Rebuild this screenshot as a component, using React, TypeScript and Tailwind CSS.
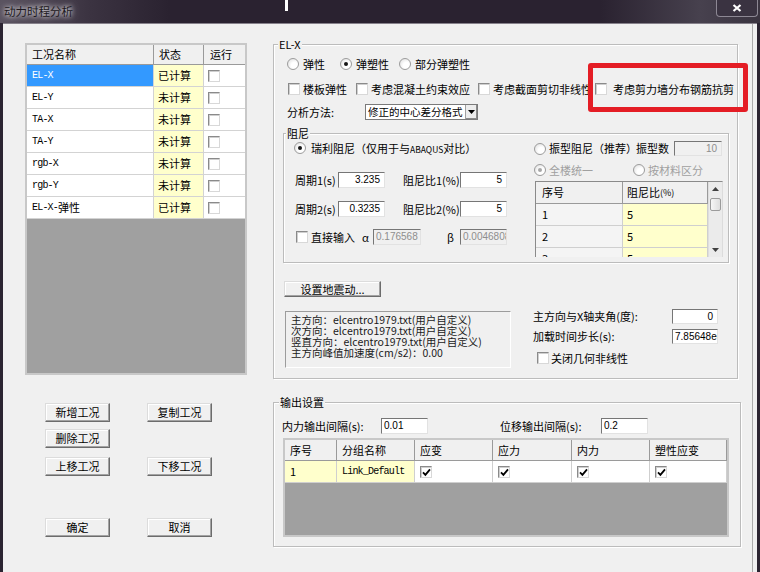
import React from 'react'

type Props = { children?: React.ReactNode; className?: string }

function Check({ checked = false, className = '' }: { checked?: boolean; className?: string }) {
  return (
    <span className={`relative inline-block w-[12px] h-[12px] shrink-0 bg-white border border-[#8a8a8a] border-b-[#d8d8d8] border-r-[#d8d8d8] shadow-[inset_1px_1px_0_#cfcfcf] ${className}`}>
      {checked && (
        <svg className="absolute left-[1px] top-[1px]" width="9" height="9" viewBox="0 0 9 9">
          <path d="M1 4.3 L3.4 6.8 L8 1.4" fill="none" stroke="#000" strokeWidth="1.8" />
        </svg>
      )}
    </span>
  )
}

function Radio({ on = false, disabled = false, className = '' }: { on?: boolean; disabled?: boolean; className?: string }) {
  return (
    <span className={`inline-flex items-center justify-center w-[12px] h-[12px] shrink-0 rounded-full border border-[#9c9c9c] bg-[radial-gradient(circle_at_65%_65%,#ffffff_35%,#d9d9d9_100%)] ${className}`}>
      {on && <span className={`w-[4px] h-[4px] rounded-full ${disabled ? 'bg-[#a8a8a8]' : 'bg-[#151515]'}`} />}
    </span>
  )
}

function Field({ value, className = '', left = false, disabled = false }: { value: string; className?: string; left?: boolean; disabled?: boolean }) {
  return (
    <div className={`flex items-center px-[2px] overflow-hidden whitespace-nowrap leading-none text-[10px] font-['Liberation_Sans',sans-serif] border border-[#767676] border-b-[#e2e2e2] border-r-[#e2e2e2] ${left ? 'justify-start' : 'justify-end pr-[4px]'} ${disabled ? 'bg-[#f0f0f0] text-[#8e8e8e]' : 'bg-white text-black'} ${className}`}>
      {value}
    </div>
  )
}

function Btn({ children, className = '' }: Props) {
  return (
    <div className={`flex items-center justify-center leading-none bg-[#f0f0f0] border border-[#dcdcdc] border-r-[#6c6c6c] border-b-[#6c6c6c] shadow-[inset_-1px_-1px_0_#a3a3a3,inset_1px_1px_0_#ffffff] ${className}`}>
      {children}
    </div>
  )
}

function Group({ title, className = '', legend = 'left-[4px]', children }: Props & { title: string; legend?: string }) {
  return (
    <div className={`relative border border-[#bcbcbc] shadow-[1px_1px_0_#ffffff,inset_1px_1px_0_#ffffff] ${className}`}>
      <span className={`absolute -top-[8px] bg-[#f0f0f0] px-[1px] leading-[14px] ${legend}`}>{title}</span>
      {children}
    </div>
  )
}

const mono = "font-['Liberation_Mono','Noto_Sans_CJK_SC',monospace] text-[10px] tracking-[-0.8px]"

const cases: { name: React.ReactNode; status: string; sel?: boolean }[] = [
  { name: 'EL-X', status: '已计算', sel: true },
  { name: 'EL-Y', status: '未计算' },
  { name: 'TA-X', status: '未计算' },
  { name: 'TA-Y', status: '未计算' },
  { name: 'rgb-X', status: '未计算' },
  { name: 'rgb-Y', status: '未计算' },
  { name: <>EL-X-<span className="font-['Noto_Sans_CJK_SC',sans-serif] text-[11px] tracking-normal">弹性</span></>, status: '已计算' },
]

const outCols = ['应变', '应力', '内力', '塑性应变']

export default function App() {
  return (
    <div className="relative w-[760px] h-[572px] overflow-hidden flex flex-col bg-[#2b2431] text-[11px] text-black font-['Noto_Sans_CJK_SC','Liberation_Sans',sans-serif]">
      {/* title bar */}
      <div className="h-[23px] shrink-0 flex bg-[linear-gradient(90deg,#5a5360_0px,#3b3341_90px,#2a2230_170px,#2a2230_600px,#47414e_700px,#3a3440_760px)]">
        <span className="ml-[4px] mt-[4px] leading-[14px] text-[11.5px] text-[#1c1820] [text-shadow:0_0_4px_#ffffff,0_0_8px_#cfcad4]">动力时程分析</span>
        <div className="ml-auto mr-[2px] w-[42px] h-[17px] flex items-center justify-center rounded-b-[4px] border border-t-0 border-[#8d8894] bg-[#3a3341]">
          <svg width="10" height="8" viewBox="0 0 10 8">
            <path d="M1.5 1 L8.5 7 M8.5 1 L1.5 7" stroke="#ffffff" strokeWidth="2.2" />
          </svg>
        </div>
      </div>
      <div className="absolute left-[285px] top-0 w-[3px] h-[11px] bg-white" />

      {/* body */}
      <div className="ml-[3px] mr-[3px] flex-1 bg-[#f0f0f0] border-t border-[#86818b]">
        <div className="w-[750px] h-full flex pl-[22px] pt-[19px] border-r border-[#ababab]">

          {/* left column */}
          <div className="w-[222px] flex flex-col">
            <div className="h-[332px] flex flex-col border-2 border-[#c8c8c8] bg-[#a0a0a0]">
              <div className="h-[20px] flex bg-[#f0f0f0]">
                <div className="w-[127px] flex items-center pl-[5px] border-r border-b border-[#9a9a9a]">工况名称</div>
                <div className="w-[50px] flex items-center pl-[5px] border-r border-b border-[#9a9a9a]">状态</div>
                <div className="flex-1 flex items-center pl-[6px] border-b border-[#9a9a9a]">运行</div>
              </div>
              {cases.map((c, i) => (
                <div key={i} className="h-[22px] flex border-b border-[#d3d3d3]">
                  <div className={`w-[127px] flex items-center pl-[5px] border-r border-[#d3d3d3] ${mono} ${c.sel ? 'bg-[#3399ff] text-white' : 'bg-white'}`}>{c.name}</div>
                  <div className="w-[50px] flex items-center pl-[4px] border-r border-[#d3d3d3] bg-[#ffffcc]">{c.status}</div>
                  <div className="flex-1 flex items-center pl-[4px] bg-white"><Check /></div>
                </div>
              ))}
            </div>

            <div className="mt-[28px] flex">
              <Btn className="ml-[20px] w-[65px] h-[19px]">新增工况</Btn>
              <Btn className="ml-[37px] w-[65px] h-[19px]">复制工况</Btn>
            </div>
            <div className="mt-[7px] flex">
              <Btn className="ml-[20px] w-[65px] h-[19px]">删除工况</Btn>
            </div>
            <div className="mt-[9px] flex">
              <Btn className="ml-[20px] w-[65px] h-[19px]">上移工况</Btn>
              <Btn className="ml-[37px] w-[65px] h-[19px]">下移工况</Btn>
            </div>
            <div className="mt-[42px] flex">
              <Btn className="ml-[20px] w-[65px] h-[19px]">确定</Btn>
              <Btn className="ml-[37px] w-[65px] h-[19px]">取消</Btn>
            </div>
          </div>

          {/* right column */}
          <div className="ml-[26px] mt-[1px] flex flex-col">
            <Group title="EL-X" className="w-[465px] h-[335px]" legend="left-[4px]">
              <div className="flex flex-col whitespace-nowrap">
                <div className="mt-[12px] h-[14px] flex items-center">
                  <Radio className="ml-[13px]" />
                  <span className="ml-[4px]">弹性</span>
                  <Radio on className="ml-[15px]" />
                  <span className="ml-[4px]">弹塑性</span>
                  <Radio className="ml-[10px]" />
                  <span className="ml-[4px]">部分弹塑性</span>
                </div>

                <div className="mt-[11px] h-[14px] flex items-center">
                  <Check className="ml-[14px]" />
                  <span className="ml-[3px]">楼板弹性</span>
                  <Check className="ml-[9px]" />
                  <span className="ml-[3px]">考虑混凝土约束效应</span>
                  <Check className="ml-[8px]" />
                  <span className="ml-[3px]">考虑截面剪切非线性</span>
                  <Check className="ml-[3px]" />
                  <span className="ml-[6px]">考虑剪力墙分布钢筋抗剪</span>
                </div>

                <div className="mt-[8px] h-[16px] flex items-center">
                  <span className="ml-[13px] w-[78px]">分析方法:</span>
                  <div className="w-[113px] h-[16px] flex bg-white border border-[#7a7a7a]">
                    <span className="flex-1 pl-[2px] text-[10.5px] leading-[14px] overflow-hidden">修正的中心差分格式</span>
                    <div className="w-[12px] flex items-center justify-center bg-[#ececec] border-l border-[#a0a0a0] shadow-[inset_-1px_-1px_0_#8a8a8a]">
                      <svg width="7" height="4" viewBox="0 0 7 4"><path d="M0 0 L7 0 L3.5 4Z" fill="#000" /></svg>
                    </div>
                  </div>
                </div>

                {/* damping */}
                <Group title="阻尼" className="ml-[9px] mt-[13px] w-[446px] h-[130px]" legend="left-[2px]">
                  <div className="flex">
                    <div className="w-[226px] flex flex-col">
                      <div className="mt-[7px] h-[14px] flex items-center">
                        <Radio on className="ml-[10px]" />
                        <span className="ml-[5px]">瑞利阻尼（仅用于与<span className="text-[8.5px]">ABAQUS</span>对比）</span>
                      </div>
                      <div className="mt-[17px] h-[16px] flex items-center">
                        <span className="ml-[11px] w-[43px]">周期1(s)</span>
                        <Field value="3.235" className="w-[47px] h-[16px]" />
                        <span className="ml-[18px] w-[57px]">阻尼比1(%)</span>
                        <Field value="5" className="w-[47px] h-[16px]" />
                      </div>
                      <div className="mt-[13px] h-[16px] flex items-center">
                        <span className="ml-[11px] w-[43px]">周期2(s)</span>
                        <Field value="0.3235" className="w-[47px] h-[16px]" />
                        <span className="ml-[18px] w-[57px]">阻尼比2(%)</span>
                        <Field value="5" className="w-[47px] h-[16px]" />
                      </div>
                      <div className="mt-[12px] h-[16px] flex items-center">
                        <Check className="ml-[12px]" />
                        <span className="ml-[3px] w-[51px]">直接输入</span>
                        <span className="w-[11px]">α</span>
                        <Field value="0.176568" left disabled className="w-[48px] h-[16px]" />
                        <span className="ml-[26px] w-[13px]">β</span>
                        <Field value="0.00468086" left disabled className="w-[47px] h-[16px]" />
                      </div>
                    </div>

                    <div className="ml-[24px] w-[189px] flex flex-col">
                      <div className="mt-[7px] h-[15px] flex items-center">
                        <Radio />
                        <span className="ml-[3px] w-[87px]">振型阻尼（推荐）</span>
                        <span className="w-[38px]">振型数</span>
                        <Field value="10" disabled className="w-[48px] h-[15px]" />
                      </div>
                      <div className="mt-[7px] h-[14px] flex items-center text-[#a0a0a0]">
                        <Radio on disabled />
                        <span className="ml-[3px] w-[84px]">全楼统一</span>
                        <Radio />
                        <span className="ml-[3px]">按材料区分</span>
                      </div>
                      <div className="mt-[4px] ml-[1px] w-[188px] h-[76px] flex overflow-hidden border border-[#8a8a8a] border-r-[#dcdcdc] border-b-0 bg-white">
                        <div className="w-[172px] flex flex-col">
                          <div className="h-[22px] shrink-0 flex bg-[#f0f0f0]">
                            <div className="w-[87px] flex items-center pl-[6px] border-r border-b border-[#9a9a9a]">序号</div>
                            <div className="flex-1 flex items-center pl-[4px] border-r border-b border-[#9a9a9a]">阻尼比<span className="text-[9px]">(%)</span></div>
                          </div>
                          {['1', '2', '3'].map(n => (
                            <div key={n} className="h-[22px] shrink-0 flex border-b border-[#cfcfcf]">
                              <div className="w-[87px] flex items-center pl-[6px] bg-[#f4f4f4] border-r border-[#cfcfcf]">{n}</div>
                              <div className="flex-1 flex items-center pl-[4px] bg-[#ffffcc] border-r border-[#cfcfcf]">5</div>
                            </div>
                          ))}
                        </div>
                        <div className="w-[14px] flex flex-col bg-[#ebebeb] border-l border-[#dedede]">
                          <div className="h-[14px] flex items-center justify-center">
                            <svg width="7" height="4" viewBox="0 0 7 4"><path d="M0 4 L3.5 0 L7 4Z" fill="#404040" /></svg>
                          </div>
                          <div className="mt-[2px] mx-[1px] h-[13px] rounded-[2px] border border-[#9b9b9b] bg-[linear-gradient(90deg,#f6f6f6,#dedede)]" />
                          <div className="flex-1" />
                          <div className="h-[14px] flex items-center justify-center">
                            <svg width="7" height="4" viewBox="0 0 7 4"><path d="M0 0 L7 0 L3.5 4Z" fill="#404040" /></svg>
                          </div>
                        </div>
                      </div>
                    </div>
                  </div>
                </Group>

                <Btn className="ml-[10px] mt-[18px] w-[97px] h-[16px]">设置地震动...</Btn>

                <div className="mt-[12px] h-[59px] flex items-start">
                  <div className="ml-[11px] mt-[2px] w-[226px] h-[57px] pl-[5px] pt-[2px] text-[10.5px] leading-[11px] text-[#1a1a1a] border border-[#9c9c9c] border-b-white border-r-white">
                    <div>主方向：elcentro1979.txt(用户自定义)</div>
                    <div>次方向：elcentro1979.txt(用户自定义)</div>
                    <div>竖直方向：elcentro1979.txt(用户自定义)</div>
                    <div>主方向峰值加速度(cm/s2)：0.00</div>
                  </div>
                  <div className="ml-[22px] flex flex-col">
                    <div className="h-[15px] flex items-center">
                      <span className="w-[139px]">主方向与X轴夹角(度):</span>
                      <Field value="0" className="w-[46px] h-[15px]" />
                    </div>
                    <div className="mt-[5px] h-[15px] flex items-center">
                      <span className="w-[139px]">加载时间步长(s):</span>
                      <Field value="7.85648e-005" left className="w-[46px] h-[15px] px-[1px]" />
                    </div>
                    <div className="mt-[7px] h-[14px] flex items-center">
                      <Check className="ml-[4px]" />
                      <span className="ml-[2px]">关闭几何非线性</span>
                    </div>
                  </div>
                </div>
              </div>
            </Group>

            {/* output settings */}
            <Group title="输出设置" className="mt-[23px] w-[468px] h-[145px]" legend="left-[5px]">
              <div className="flex flex-col whitespace-nowrap">
                <div className="mt-[15px] h-[16px] flex items-center">
                  <span className="ml-[8px] w-[99px]">内力输出间隔(s):</span>
                  <Field value="0.01" left className="w-[47px] h-[16px]" />
                  <span className="ml-[72px] w-[101px]">位移输出间隔(s):</span>
                  <Field value="0.2" left className="w-[47px] h-[16px]" />
                </div>
                <div className="mt-[4px] ml-[9px] w-[446px] h-[99px] flex flex-col border-2 border-[#c8c8c8] bg-[#a0a0a0]">
                  <div className="h-[21px] flex bg-[#f0f0f0]">
                    <div className="w-[52px] flex items-center pl-[5px] border-r border-b border-[#9a9a9a]">序号</div>
                    <div className="w-[78px] flex items-center pl-[5px] border-r border-b border-[#9a9a9a]">分组名称</div>
                    {outCols.map((c, i) => (
                      <div key={c} className={`${i === 3 ? 'flex-1' : i === 1 ? 'w-[79px]' : 'w-[78px]'} flex items-center pl-[5px] border-r border-b border-[#9a9a9a]`}>{c}</div>
                    ))}
                  </div>
                  <div className="h-[22px] flex border-b border-[#cfcfcf]">
                    <div className="w-[52px] flex items-center pl-[5px] bg-[#ffffcc] border-r border-[#cfcfcf]">1</div>
                    <div className={`w-[78px] flex items-center pl-[5px] bg-[#ffffcc] border-r border-[#cfcfcf] ${mono}`}>Link_Default</div>
                    {outCols.map((c, i) => (
                      <div key={c} className={`${i === 3 ? 'flex-1' : i === 1 ? 'w-[79px]' : 'w-[78px]'} flex items-center pl-[5px] bg-white border-r border-[#cfcfcf]`}>
                        <Check checked />
                      </div>
                    ))}
                  </div>
                </div>
              </div>
            </Group>
          </div>
        </div>
      </div>

      {/* red highlight over the checkbox */}
      <div className="absolute left-[588px] top-[63px] w-[160px] h-[49px] border-[5px] border-[#e41d25] rounded-[3px] pointer-events-none" />
    </div>
  )
}
